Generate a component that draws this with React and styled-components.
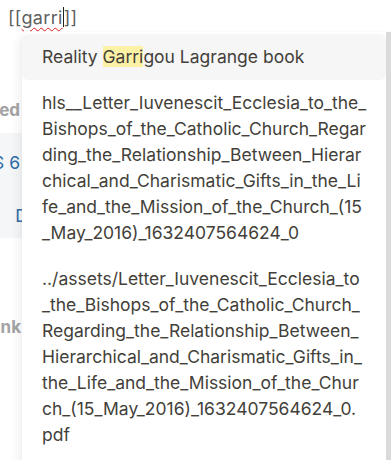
import styled, { createGlobalStyle } from 'styled-components';

const GlobalStyle = createGlobalStyle`
  html, body {
    margin: 0;
    padding: 0;
    background: #ffffff;
    font-family: Inter, "Noto Sans", sans-serif;
    overflow: hidden;
  }
`;

// Page behind the popup
const Page = styled.div`
  position: relative;
  width: 391px;
  height: 460px;
  overflow: hidden;
`;

const EditorLine = styled.div`
  padding: 6px 0 0 8px;
  height: 24px;
  font-size: 18px;
  line-height: 24px;
  color: #5f5f5f;
  letter-spacing: 0.3px;
`;

const Typed = styled.span`
  text-decoration: underline wavy #e02020;
  text-decoration-thickness: 1px;
  text-underline-offset: 3px;
`;

const Caret = styled.span`
  display: inline-block;
  width: 1px;
  height: 20px;
  margin: 0 0 -3px 0;
  background: #222;
`;

const Backdrop = styled.div`
  display: flex;
  flex-direction: column;
  width: 22px;
  margin-top: 68px;
`;

const Clip = styled.div`
  display: flex;
  justify-content: flex-end;
  overflow: hidden;
  white-space: nowrap;
  height: 24px;
  align-items: center;
  margin-top: ${({ mt }) => mt || 0}px;
`;

const Heading = styled.span`
  font-size: 17px;
  font-weight: 700;
  color: #a3a3a3;
  padding-right: ${({ pr }) => pr || 0}px;
`;

const BandBlock = styled.div`
  display: flex;
  flex-direction: column;
  width: 30px;
  background: #f5f6f7;
  margin-top: 11px;
  padding: 17px 0 11px;
  gap: 29px;
`;

const LinkText = styled.span`
  font-size: 17.5px;
  color: #2f6ca8;
  padding-right: ${({ pr }) => pr || 0}px;
`;

// Autocomplete popup
const Popup = styled.div`
  position: absolute;
  left: 22px;
  top: 32px;
  width: 369px;
  height: 460px;
  display: flex;
  background: #ffffff;
  box-shadow: -4px 4px 10px rgba(0, 0, 0, 0.06), 0 0 2px rgba(0, 0, 0, 0.05);
  border-radius: 6px 0 0 0;
`;

const List = styled.div`
  flex: 1;
  padding: 2px 0 0 0;
`;

const Item = styled.div`
  padding: 10px 15px 10px 20px;
  border-radius: 6px;
  font-size: 17.5px;
  line-height: 26px;
  color: #433f3a;
  background: ${({ active }) => (active ? '#f6f6f6' : 'transparent')};
`;

const Line = styled.span`
  display: block;
  white-space: nowrap;
`;

const Mark = styled.mark`
  background: #fdf1a6;
  color: inherit;
`;

const Scrollbar = styled.div`
  width: 5px;
  background: #dadada;
`;

const pageLines = [
  'hls__Letter_Iuvenescit_Ecclesia_to_the_',
  'Bishops_of_the_Catholic_Church_Regar',
  'ding_the_Relationship_Between_Hierar',
  'chical_and_Charismatic_Gifts_in_the_Li',
  'fe_and_the_Mission_of_the_Church_(15',
  '_May_2016)_1632407564624_0',
];

const assetLines = [
  '../assets/Letter_Iuvenescit_Ecclesia_to',
  '_the_Bishops_of_the_Catholic_Church_',
  'Regarding_the_Relationship_Between_',
  'Hierarchical_and_Charismatic_Gifts_in_',
  'the_Life_and_the_Mission_of_the_Chur',
  'ch_(15_May_2016)_1632407564624_0.',
  'pdf',
];

export default function App() {
  return (
    <>
      <GlobalStyle />
      <Page>
        <EditorLine>
          [[<Typed>garri</Typed><Caret />]]
        </EditorLine>
        <Backdrop>
          <Clip>
            <Heading pr={2}>Referenced</Heading>
          </Clip>
          <BandBlock>
            <Clip>
              <LinkText pr={10}>PAGES 6</LinkText>
            </Clip>
            <Clip>
              <LinkText pr={2}>D</LinkText>
            </Clip>
          </BandBlock>
          <Clip mt={77}>
            <Heading pr={1}>Unlink</Heading>
          </Clip>
        </Backdrop>
        <Popup>
          <List>
            <Item active>
              Reality <Mark>Garri</Mark>gou Lagrange book
            </Item>
            <Item>
              {pageLines.map((l) => <Line key={l}>{l}</Line>)}
            </Item>
            <Item>
              {assetLines.map((l) => <Line key={l}>{l}</Line>)}
            </Item>
          </List>
          <Scrollbar />
        </Popup>
      </Page>
    </>
  );
}
